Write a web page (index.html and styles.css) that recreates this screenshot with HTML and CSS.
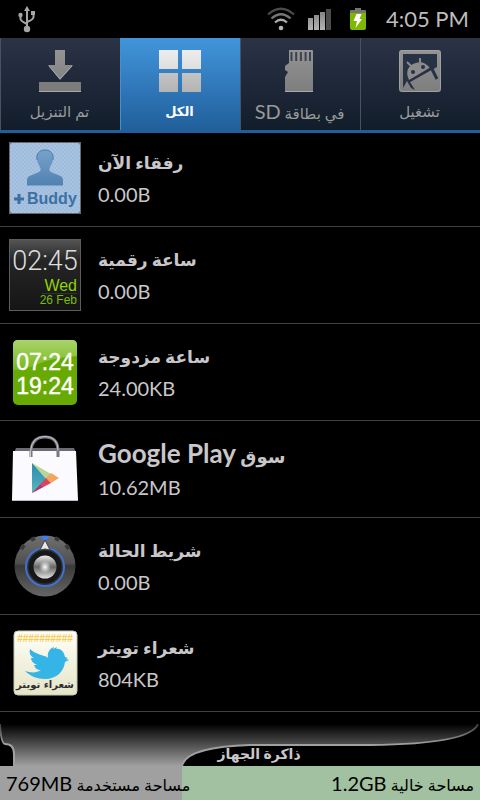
FILE: index.html
```html
<!DOCTYPE html>
<html lang="ar">
<head>
<meta charset="utf-8">
<meta name="viewport" content="width=device-width, initial-scale=1">
<title>الكل</title>
<link rel="stylesheet" href="styles.css">
</head>
<body>
<header class="status">
  <svg class="usb" width="18" height="28" viewBox="0 0 18 28" fill="none" stroke="#a6a6a6" stroke-width="2">
    <path d="M9 5v18M2.500 10v4q0 2 6.500 5M15.500 9v3q0 2.500-6.500 5"/>
    <path d="M9 1l-3 5h6z" fill="#a6a6a6" stroke="none"/>
    <circle cx="9" cy="24" r="3.200" fill="#a6a6a6" stroke="none"/>
    <circle cx="2.500" cy="10" r="2.200" fill="#a6a6a6" stroke="none"/>
    <path d="M13 6h4v4h-4z" fill="#a6a6a6" stroke="none"/>
  </svg>
  <svg class="wifi" width="30" height="24" viewBox="0 0 30 24" fill="none" stroke-width="2.200">
    <path d="M2 7.500Q15-4 28 7.500" stroke="#4c4c4c"/>
    <path d="M5.500 11.500Q15 3 24.500 11.500" stroke="#777"/>
    <path d="M9 15.500Q15 10 21 15.500" stroke="#aaa"/>
    <circle cx="15" cy="21" r="2.300" fill="#b5b5b5"/>
  </svg>
  <svg class="signal" width="24" height="22" viewBox="0 0 24 22">
    <defs><linearGradient id="bars" gradientUnits="userSpaceOnUse" x1="0" y1="2" x2="0" y2="22"><stop stop-color="#808080"/><stop offset="1" stop-color="#b4b4b4"/></linearGradient></defs>
    <path d="M0 10h5v12H0zM6 7h5v15H6zM12 4h5v18h-5z" fill="url(#bars)"/>
    <path d="M18 1h5v21h-5z" fill="#4b4b4b"/>
  </svg>
  <svg class="battery" width="18" height="24" viewBox="0 0 18 24">
    <path d="M6 1h6v2h4q1 0 1 1v3H1V4q0-1 1-1h4z" fill="#747474"/>
    <path d="M1 6h16v15q0 2-2 2H3q-2 0-2-2z" fill="#7fb800"/>
    <path d="M7.500 7h5L10.500 12H13L6.500 21 8 14H4.500z" fill="#fff"/>
  </svg>
  <span class="time">4:05 PM</span>
</header>

<nav class="tabs">
  <button class="tab" type="button">
    <svg width="44" height="44" viewBox="0 0 44 44">
      <defs><linearGradient id="metal" gradientUnits="userSpaceOnUse" x1="0" y1="0" x2="0" y2="44"><stop stop-color="#949494"/><stop offset="1" stop-color="#7d7d7d"/></linearGradient></defs>
      <path d="M17 1h10v15h8L22 31 10 16h7z" fill="url(#metal)"/>
      <path d="M1 33h42v10H1z" fill="#7c7c7c"/>
      <path d="M1 42.500h42M11 17l11 13 12-13" fill="none" stroke="#aaa"/>
    </svg>
    <span dir="rtl">تم التنزيل</span>
  </button>
  <button class="tab active" type="button" aria-current="page">
    <svg width="44" height="44" viewBox="0 0 44 44">
      <defs><linearGradient id="tiles" gradientUnits="userSpaceOnUse" x1="0" y1="0" x2="0" y2="44"><stop stop-color="#eee"/><stop offset=".44" stop-color="#dedede"/><stop offset=".5" stop-color="#c6c6c6"/><stop offset="1" stop-color="#b2b2b2"/></linearGradient></defs>
      <path d="M1 1h19v19H1zM24 1h19v19H24zM1 24h19v19H1zM24 24h19v19H24z" fill="url(#tiles)"/>
    </svg>
    <span dir="rtl">الكل</span>
  </button>
  <button class="tab" type="button">
    <svg width="44" height="44" viewBox="0 0 44 44">
      <path d="M11 1h23q1 0 1 1v41H7V28l3-5-3-2v-4l4-3z" fill="url(#metal)"/>
      <path d="M13.500 3v9M18.200 3v9M22.900 3v9M27.600 3v9M32 3v9" stroke="#3b4250" stroke-width="2"/>
      <path d="M7 42.500h28" stroke="#aaa"/>
    </svg>
    <span dir="rtl">في بطاقة <bdi class="sd">SD</bdi></span>
  </button>
  <button class="tab" type="button">
    <svg width="44" height="44" viewBox="0 0 44 44">
      <rect x="1" y="1" width="42" height="42" rx="3" fill="url(#metal)"/>
      <path d="M5 5h34v13L12 33l5 8-4-2-4-7-4 7z" fill="#273244"/>
      <path d="M11 31Q6 20 15 15Q25 10 32 19z" fill="#8b8b8b"/>
      <path d="M13 17l-4-4M22 14V9" stroke="#8b8b8b" stroke-width="2"/>
      <path d="M33 18l6 12" stroke="#273244" stroke-width="3"/>
      <path d="M12 32l21-13" stroke="#273244" stroke-width="2"/>
      <circle cx="15" cy="23" r="2" fill="#273244"/><circle cx="25" cy="18" r="2" fill="#273244"/>
      <rect x="1.500" y="1.500" width="41" height="41" rx="3" fill="none" stroke="#a0a0a0"/>
    </svg>
    <span dir="rtl">تشغيل</span>
  </button>
</nav>

<main>
<ul class="apps">
  <li class="app">
    <svg class="icon" width="72" height="72" viewBox="0 0 72 72">
      <defs>
        <pattern id="weave" width="4" height="4" patternUnits="userSpaceOnUse"><rect width="4" height="4" fill="#a9c4e2"/><path d="M0 0l4 4M4 0L0 4" stroke="#9ab8da" stroke-width=".7"/></pattern>
        <linearGradient id="person" x2="0" y2="1"><stop stop-color="#76a3cb"/><stop offset="1" stop-color="#5081b0"/></linearGradient>
      </defs>
      <rect x=".5" y=".5" width="71" height="71" fill="#6f7f90" stroke="#6a6a6a"/>
      <rect x="1" y="1" width="70" height="70" rx="3" fill="url(#weave)"/>
      <path d="M18 43.500V38c0-3 2-4 5-5l7-3c2-1 2-3 1-5-2-3-3-6-3-9 0-5 3-8 8-8s8 3 8 8c0 3-1 6-3 9-1 2-1 4 1 5l7 3c3 1 5 2 5 5v5.500z" fill="url(#person)"/>
      <path d="M28 18c-1-6 2-10 8-10s9 4 8 10" fill="none" stroke="#4a79a6"/>
      <path d="M5 57h10M10 52v10" stroke="#3c70a3" stroke-width="3"/>
      <text class="buddy" x="18" y="62">Buddy</text>
    </svg>
    <div class="info"><h2 dir="rtl">رفقاء الآن</h2><p>0.00B</p></div>
  </li>
  <li class="app">
    <svg class="icon" width="72" height="72" viewBox="0 0 72 72">
      <defs><linearGradient id="slate" x2="0" y2="1"><stop stop-color="#555"/><stop offset=".3" stop-color="#252525"/><stop offset="1" stop-color="#151515"/></linearGradient></defs>
      <rect x=".5" y=".5" width="71" height="71" fill="url(#slate)" stroke="#5c5c5c"/>
      <text class="digits" x="36" y="31">02:45</text>
      <text class="weekday" x="68" y="52">Wed</text>
      <path d="M33 54.500h35" stroke="#333"/>
      <text class="date" x="68" y="65">26 Feb</text>
    </svg>
    <div class="info"><h2 dir="rtl">ساعة رقمية</h2><p>0.00B</p></div>
  </li>
  <li class="app">
    <svg class="icon" width="72" height="72" viewBox="0 0 72 72">
      <defs><linearGradient id="gloss" x2="0" y2="1"><stop stop-color="#a8d46c"/><stop offset="1" stop-color="#79b81b"/></linearGradient></defs>
      <rect x="4" y="4" width="64" height="65" rx="5" fill="#67aa04"/>
      <path d="M4 34V9q0-5 5-5h54q5 0 5 5v11Q42 22 29 28 16 34 4 34z" fill="url(#gloss)"/>
      <text class="dual" x="36" y="34">07:24</text>
      <text class="dual" x="36" y="58">19:24</text>
    </svg>
    <div class="info"><h2 dir="rtl">ساعة مزدوجة</h2><p>24.00KB</p></div>
  </li>
  <li class="app">
    <svg class="icon" width="72" height="72" viewBox="0 0 72 72">
      <defs><linearGradient id="teal" x2="0" y2="1"><stop stop-color="#2f8da5"/><stop offset=".5" stop-color="#3f9ebb"/><stop offset="1" stop-color="#5cbcae"/></linearGradient></defs>
      <path d="M7 15h58l2 5H5z" fill="#6d6a76"/>
      <path d="M4 18h63l2 49H3z" fill="#fbfafe"/>
      <path d="M3 67.500h66" stroke="#b9bbd0"/>
      <path d="M22 24v-6Q23 4 36 4t13 14v6" fill="none" stroke="#777784" stroke-width="3"/>
      <path d="M21.500 24v-6Q23 3.500 36 3.500t13 14" fill="none" stroke="#c9c9d2" stroke-width="1"/>
      <path d="M23 30l17 15-17 15z" fill="url(#teal)"/>
      <path d="M23 30l19 11-5 5z" fill="#b9d698"/>
      <path d="M42 40l8 5-8 5-5-5z" fill="#f3a55f"/>
      <path d="M23 60l14-15 5 5z" fill="#d84560"/>
      <path d="M23 60l8-8 3 2z" fill="#9f3b83"/>
    </svg>
    <div class="info"><h2 class="store" dir="rtl">سوق <bdi>Google Play</bdi></h2><p>10.62MB</p></div>
  </li>
  <li class="app">
    <svg class="icon" width="72" height="72" viewBox="0 0 72 72">
      <defs>
        <linearGradient id="disc" x2="0" y2="1"><stop stop-color="#707070"/><stop offset=".45" stop-color="#505050"/><stop offset=".5" stop-color="#3a3a3a"/><stop offset="1" stop-color="#666"/></linearGradient>
        <linearGradient id="steel" x2="0" y2="1"><stop stop-color="#eee"/><stop offset=".5" stop-color="#666"/><stop offset="1" stop-color="#e4e4e4"/></linearGradient>
        <radialGradient id="shine"><stop stop-color="#fff"/><stop offset="1" stop-color="#fff" stop-opacity="0"/></radialGradient>
      </defs>
      <circle cx="36" cy="36" r="30.500" fill="url(#disc)"/>
      <path d="M12 19l3-4M22 10l4-2M60 19l-3-4M50 10l-4-2" stroke="#3a3a3a" stroke-width="4"/>
      <path d="M32 6h8q-1 4-4 4t-4-4z" fill="#3d7df5"/>
      <circle cx="36" cy="37" r="19" fill="#333" stroke="#3f71cf" stroke-width="2"/>
      <circle cx="36" cy="37" r="16.500" fill="#171717"/>
      <circle cx="36" cy="37" r="11.500" fill="url(#steel)"/>
      <circle cx="36" cy="37" r="6" fill="url(#shine)"/>
      <path d="M36 10l5 10q-5-2-10 0z" fill="#e8e8e8" stroke="#444"/>
    </svg>
    <div class="info"><h2 dir="rtl">شريط الحالة</h2><p>0.00B</p></div>
  </li>
  <li class="app">
    <svg class="icon" width="72" height="72" viewBox="0 0 72 72">
      <defs><linearGradient id="paper" x2="0" y2="1"><stop stop-color="#fffff8"/><stop offset="1" stop-color="#e6e4c6"/></linearGradient></defs>
      <rect x="5" y="4" width="63" height="64" rx="4" fill="url(#paper)" stroke="#c9c7b2"/>
      <text class="hashes" x="36" y="15">##########</text>
      <path d="M21 22c4 4 9 5 14 7 2 0 3 1 4 2-1-5 1-9 6-11l-1 2 4-2-1 2c5-1 8 3 9 8l3 1-2 1 3 1-4 2c-1 9-8 17-20 17-8 0-15-3-20-8 6 2 12 2 16-1-4 0-6-2-7-5l3 0c-4-2-6-4-6-7l3 0c-4-2-5-5-4-9z" fill="#35b5e5"/>
      <text class="caption" x="36" y="61" direction="rtl">شعراء تويتر</text>
    </svg>
    <div class="info"><h2 dir="rtl">شعراء تويتر</h2><p>804KB</p></div>
  </li>
</ul>
</main>

<footer class="storage">
  <div class="chart">
    <svg class="curve" viewBox="0 0 480 54" preserveAspectRatio="none">
      <defs>
        <linearGradient id="fade" gradientUnits="userSpaceOnUse" x1="0" y1="12" x2="0" y2="54"><stop stop-color="#000"/><stop offset="1" stop-color="#a0a0a0"/></linearGradient>
        <linearGradient id="edge" gradientUnits="userSpaceOnUse" x1="0" y1="10" x2="0" y2="32"><stop stop-color="#333"/><stop offset="1" stop-color="#a0a0a0"/></linearGradient>
      </defs>
      <path d="M0 12Q1 32 5 32q9 0 9 10v12h168q4-19 68-21h120q100-1 108-21z" fill="url(#fade)"/>
      <path d="M0 12Q1 32 5 32q9 0 9 10v12M182 54q4-19 68-21h120q100-1 108-21" fill="none" stroke="url(#edge)" stroke-width="2"/>
    </svg>
    <h3 dir="rtl">ذاكرة الجهاز</h3>
  </div>
  <div class="meter">
    <div class="used" style="width: 38%"><span dir="rtl">مساحة مستخدمة <bdi>769MB</bdi></span></div>
    <div class="free"><span dir="rtl">مساحة خالية <bdi>1.2GB</bdi></span></div>
  </div>
</footer>
</body>
</html>
```

FILE: styles.css
```css
* { box-sizing: border-box; }

body {
  margin: 0;
  min-height: 100vh;
  display: flex;
  flex-direction: column;
  background: #000;
  color: #c9c7c9;
  font-family: Lato, "DejaVu Sans", sans-serif;
}

h2, h3, p, ul { margin: 0; padding: 0; }

.status {
  height: 38px;
  padding: 0 11px 0 18px;
  display: flex;
  align-items: center;
}
.usb { margin-right: auto; }
.signal { margin-left: 12px; }
.battery { margin: 0 19px 0 17px; }
.time {
  font-size: 22px;
  line-height: 38px;
  color: #bdbdbd;
}

.tabs {
  position: relative;
  height: 92px;
  display: grid;
  grid-template-columns: repeat(4, 1fr);
  background: linear-gradient(#2b3346, #121d2b);
  box-shadow: 0 3px 0 #205f9b;
}
.tab {
  border: 0;
  border-left: 1px solid #4a5260;
  padding: 11px 2px 0 0;
  display: flex;
  flex-direction: column;
  align-items: center;
  gap: 4px;
  background: none;
  color: #9a9a9a;
  font-family: inherit;
  font-size: 15px;
  line-height: 28px;
  white-space: nowrap;
}
.tab.active {
  border-left-color: #4092d8;
  background: linear-gradient(#4295dc, #205f9b);
  color: #fff;
  font-size: 13px;
  font-weight: bold;
}
.sd { font-size: 20px; }

.apps { list-style: none; }
.app {
  height: 97px;
  padding: 0 9px;
  display: flex;
  align-items: center;
  gap: 17px;
  border-bottom: 1px solid #414141;
}
.icon { flex: none; }
.info h2 {
  font-size: 17px;
  line-height: 32px;
  font-weight: bold;
  text-align: left;
}
.info .store { font-size: 18px; }
.info h2 bdi { font-size: 26px; }
.info p {
  font-size: 20px;
  line-height: 30px;
}

.icon text { font-family: "Liberation Sans", sans-serif; }
.icon .buddy { font-size: 16px; font-weight: bold; fill: #3c70a3; }
.icon .digits { font-family: Roboto, sans-serif; font-weight: 300; font-size: 27px; fill: #ddd; text-anchor: middle; }
.icon .weekday { font-size: 16px; fill: #8fd400; text-anchor: end; }
.icon .date { font-size: 12px; fill: #7fbd00; text-anchor: end; }
.icon .dual { font-size: 23px; fill: #fff; stroke: #fff; stroke-width: .4; text-anchor: middle; }
.icon .hashes { font-size: 10px; font-weight: bold; fill: #fbc955; text-anchor: middle; }
.icon .caption { font-family: "DejaVu Sans", sans-serif; font-size: 10px; font-weight: bold; fill: #2c2c34; text-anchor: middle; }

.storage { margin-top: auto; }
.chart {
  position: relative;
  height: 54px;
}
.curve {
  display: block;
  width: 100%;
  height: 100%;
}
.chart h3 {
  position: absolute;
  bottom: 0;
  left: 0;
  right: 0;
  padding-left: 38px;
  font-size: 14px;
  line-height: 24px;
  text-align: center;
}
.meter {
  height: 34px;
  display: flex;
  background: #a1c1a1;
  color: #000;
  font-size: 16px;
  line-height: 34px;
  white-space: nowrap;
}
.meter bdi { font-size: 20px; }
.used {
  padding-left: 6px;
  background: #a0a0a0;
}
.free {
  flex: 1;
  padding-right: 6px;
  text-align: right;
}
```
